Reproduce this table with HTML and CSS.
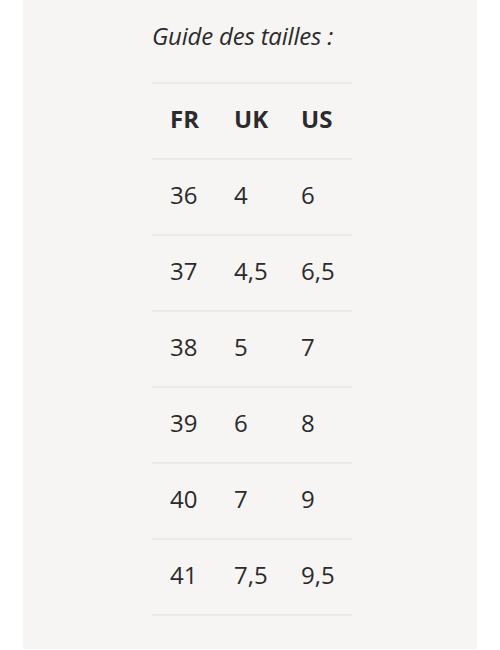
FILE: index.html
```html
<!DOCTYPE html>
<html lang="fr">
<head>
<meta charset="utf-8">
<title>Guide des tailles</title>
<link rel="stylesheet" href="styles.css">
</head>
<body>
<div class="panel">
  <div class="content">
    <h2 class="title">Guide des tailles :</h2>
    <table class="sizes">
      <thead>
        <tr><th>FR</th><th>UK</th><th>US</th></tr>
      </thead>
      <tbody>
        <tr><td>36</td><td>4</td><td>6</td></tr>
        <tr><td>37</td><td>4,5</td><td>6,5</td></tr>
        <tr><td>38</td><td>5</td><td>7</td></tr>
        <tr><td>39</td><td>6</td><td>8</td></tr>
        <tr><td>40</td><td>7</td><td>9</td></tr>
        <tr><td>41</td><td>7,5</td><td>9,5</td></tr>
      </tbody>
    </table>
  </div>
</div>
</body>
</html>
```
FILE: styles.css
```css
html, body {
  margin: 0;
  padding: 0;
  background: #ffffff;
}

body {
  font-family: "Open Sans", "Noto Sans", sans-serif;
  color: #2b2b2b;
}

.panel {
  margin: 0 23px;
  height: 649px;
  background: #f6f5f3;
}

.content {
  padding: 20px 0 0 129px;
}

.title {
  margin: 0;
  font-size: 24px;
  line-height: 32px;
  font-style: italic;
  font-weight: 400;
  letter-spacing: -0.2px;
  color: #2b2b2b;
}

.sizes {
  margin-top: 30px;
  width: 200px;
  border-collapse: collapse;
  border-top: 2px solid #ebeae8;
}

.sizes th,
.sizes td {
  box-sizing: border-box;
  padding: 0 0 4px 18px;
  height: 76px;
  text-align: left;
  font-size: 24px;
  line-height: 32px;
  border-bottom: 2px solid #ebeae8;
  vertical-align: middle;
}

.sizes th {
  font-weight: 700;
}

.sizes th:nth-child(1),
.sizes td:nth-child(1) { width: 64px; }
.sizes th:nth-child(2),
.sizes td:nth-child(2) { width: 67px; }
.sizes th:nth-child(3),
.sizes td:nth-child(3) { width: 69px; }
```
